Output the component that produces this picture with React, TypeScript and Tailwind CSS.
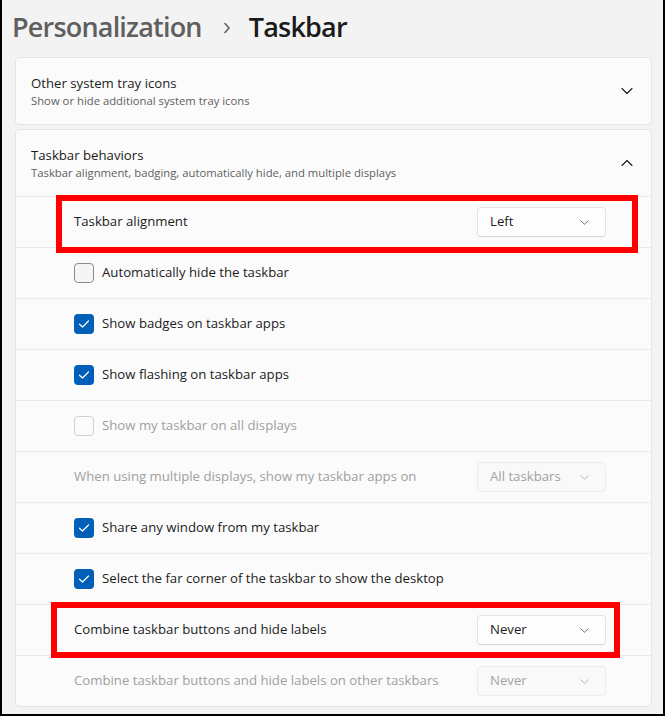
import React from "react";

type Row =
  | { kind: "check"; label: string; checked?: boolean; disabled?: boolean }
  | { kind: "select"; label: string; value: string; disabled?: boolean; mark?: "a" | "b" };

const ROWS: Row[] = [
  { kind: "select", label: "Taskbar alignment", value: "Left", mark: "a" },
  { kind: "check", label: "Automatically hide the taskbar" },
  { kind: "check", label: "Show badges on taskbar apps", checked: true },
  { kind: "check", label: "Show flashing on taskbar apps", checked: true },
  { kind: "check", label: "Show my taskbar on all displays", disabled: true },
  {
    kind: "select",
    label: "When using multiple displays, show my taskbar apps on",
    value: "All taskbars",
    disabled: true,
  },
  { kind: "check", label: "Share any window from my taskbar", checked: true },
  { kind: "check", label: "Select the far corner of the taskbar to show the desktop", checked: true },
  { kind: "select", label: "Combine taskbar buttons and hide labels", value: "Never", mark: "b" },
  {
    kind: "select",
    label: "Combine taskbar buttons and hide labels on other taskbars",
    value: "Never",
    disabled: true,
  },
];

function Chevron({ up }: { up?: boolean }) {
  return (
    <svg width="12" height="8" viewBox="0 0 12 8" className="shrink-0">
      <path
        d={up ? "M1 6.5 L6 1.5 L11 6.5" : "M1 1.5 L6 6.5 L11 1.5"}
        fill="none"
        stroke="#1b1b1b"
        strokeWidth="1.1"
        strokeLinecap="round"
        strokeLinejoin="round"
      />
    </svg>
  );
}

function Checkbox({ checked, disabled }: { checked?: boolean; disabled?: boolean }) {
  if (checked) {
    return (
      <span className="w-5 h-5 rounded-[4px] bg-[#005fb8] flex items-center justify-center shrink-0">
        <svg width="12" height="10" viewBox="0 0 12 10">
          <path
            d="M1.5 5.2 L4.5 8 L10.5 2"
            fill="none"
            stroke="#fff"
            strokeWidth="1.2"
            strokeLinecap="round"
            strokeLinejoin="round"
          />
        </svg>
      </span>
    );
  }
  return (
    <span
      className={`w-5 h-5 rounded-[4px] border shrink-0 ${
        disabled ? "border-[#cfcfcf] bg-[#fbfbfb]" : "border-[#8a8a8a] bg-[#f5f5f5]"
      }`}
    />
  );
}

function Select({ value, disabled }: { value: string; disabled?: boolean }) {
  return (
    <div
      className={`w-[129px] h-[30px] rounded-[4px] border flex items-center justify-between pl-3 pr-[16px] text-[13.2px] ${
        disabled
          ? "border-[#ececec] bg-[#f9f9f9] text-[#a2a2a2]"
          : "border-[#e3e3e3] border-b-[#d2d2d2] bg-[#fefefe] text-[#1b1b1b]"
      }`}
    >
      <span>{value}</span>
      <svg width="9" height="5" viewBox="0 0 9 5">
        <path
          d="M0.8 0.8 L4.5 4.2 L8.2 0.8"
          fill="none"
          stroke={disabled ? "#b5b5b5" : "#6a6a6a"}
          strokeWidth="1"
          strokeLinecap="round"
          strokeLinejoin="round"
        />
      </svg>
    </div>
  );
}

function SettingRow({ row }: { row: Row }) {
  const text = row.disabled ? "text-[#a0a0a0]" : "text-[#1b1b1b]";
  return (
    <div className="relative h-[51px] border-t border-[#eaeaea] flex items-center pl-[58px] pr-[45px]">
      {row.kind === "check" ? (
        <div className="flex items-center gap-2">
          <Checkbox checked={row.checked} disabled={row.disabled} />
          <span className={`text-[13.2px] ${text}`}>{row.label}</span>
        </div>
      ) : (
        <>
          <span className={`flex-1 text-[13.2px] ${text}`}>{row.label}</span>
          <Select value={row.value} disabled={row.disabled} />
        </>
      )}
      {/* red annotation boxes sit over the neighbouring rows */}
      {row.kind === "select" && row.mark === "a" && (
        <div className="absolute z-10 left-[40px] top-[-2px] w-[582px] h-[58px] border-[6px] border-[#ff0000] pointer-events-none" />
      )}
      {row.kind === "select" && row.mark === "b" && (
        <div className="absolute z-10 left-[35px] top-[-3px] w-[569px] h-[56px] border-[6px] border-[#ff0000] pointer-events-none" />
      )}
    </div>
  );
}

function CardHeader({ title, subtitle, up }: { title: string; subtitle: string; up?: boolean }) {
  return (
    <div className="h-[66px] flex items-center pl-[15px] pr-[18px]">
      <div className="flex-1 flex flex-col">
        <span className="text-[13.2px] leading-5 text-[#1b1b1b]">{title}</span>
        <span className="text-[11.3px] leading-4 text-[#5f5f5f]">{subtitle}</span>
      </div>
      <Chevron up={up} />
    </div>
  );
}

export default function App() {
  return (
    <div className="w-[665px] h-[716px] overflow-hidden bg-[#f3f3f3] border-x-2 border-b-2 border-black [font-family:'Segoe_UI','Open_Sans',sans-serif]">
      <div className="h-[57px] flex items-center pl-[10px] pb-[3px] text-[27px] tracking-[-0.8px] font-semibold leading-9">
        <span className="text-[#5f5f5f]">Personalization</span>
        <svg width="8" height="12" viewBox="0 0 8 12" className="ml-[21px] mr-[18px] mt-[2px]">
          <path d="M2 1.5 L6 6 L2 10.5" fill="none" stroke="#5f5f5f" strokeWidth="1.6" strokeLinecap="round" strokeLinejoin="round" />
        </svg>
        <span className="text-[#1b1b1b]">Taskbar</span>
      </div>
      <div className="pl-[13px] pr-[11px] flex flex-col gap-1">
        <div className="rounded-[4px] border border-[#e5e5e5] bg-[#fbfbfb]">
          <CardHeader title="Other system tray icons" subtitle="Show or hide additional system tray icons" />
        </div>
        <div className="rounded-[4px] border border-[#e5e5e5] bg-[#fbfbfb]">
          <CardHeader
            title="Taskbar behaviors"
            subtitle="Taskbar alignment, badging, automatically hide, and multiple displays"
            up
          />
          {ROWS.map((r) => (
            <SettingRow key={r.label} row={r} />
          ))}
        </div>
      </div>
    </div>
  );
}
